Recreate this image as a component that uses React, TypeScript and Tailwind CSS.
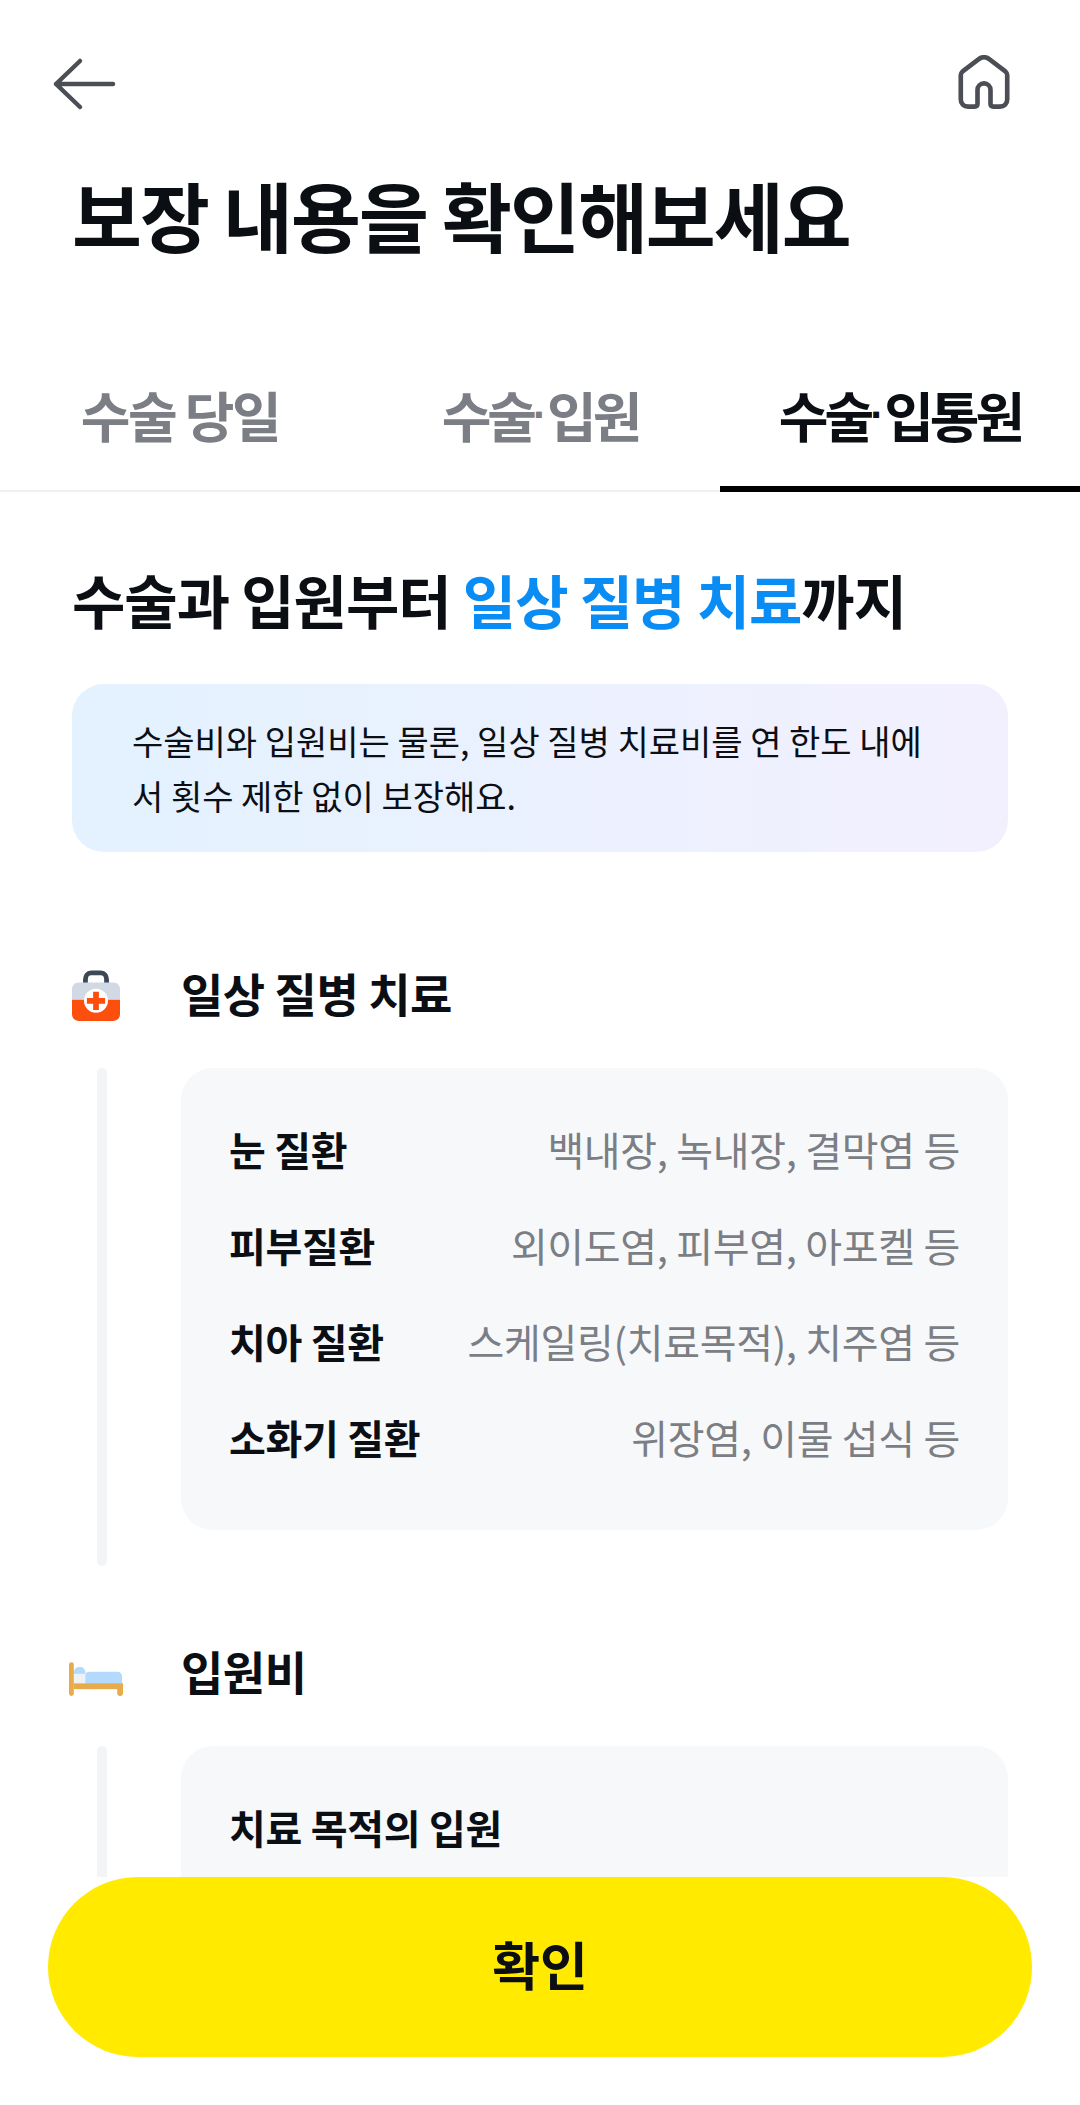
import React from "react";

const diseases = [
  { name: "눈 질환", detail: "백내장, 녹내장, 결막염 등" },
  { name: "피부질환", detail: "외이도염, 피부염, 아포켈 등" },
  { name: "치아 질환", detail: "스케일링(치료목적), 치주염 등" },
  { name: "소화기 질환", detail: "위장염, 이물 섭식 등" },
];

const font = { fontFamily: '"Noto Sans CJK KR", "Noto Sans", sans-serif' };

const FirstAidIcon = () => (
  <svg width="48" height="52" viewBox="0 0 50 54" fill="none">
    <path d="M14 14V10C14 6 16 3 20 3H30C34 3 36 6 36 10V14" stroke="#3c4856" strokeWidth="5" />
    <path d="M0 20C0 16 3 13 7 13H43C47 13 50 16 50 20V31H0V20Z" fill="#d0d9e4" />
    <path d="M0 31H50V46C50 50 47 53 43 53H7C3 53 0 50 0 46V31Z" fill="#fc4f0e" />
    <circle cx="25" cy="32" r="12.5" fill="#fff" />
    <path d="M22 22.5H28V29H34.5V35H28V41.5H22V35H15.5V29H22V22.5Z" fill="#fc4f0e" />
  </svg>
);

const BedIcon = () => (
  <svg width="54" height="35" viewBox="0 0 56 36" fill="none">
    <rect x="5" y="10" width="13" height="16" fill="#eef2f7" />
    <path d="M5 12C5 6 8 5 11 5C14 5 17 6 17 12H5Z" fill="#b3dafc" />
    <path d="M17 14C17 11 19 10 21 10H50C53 10 55 12 55 15V24H17V14Z" fill="#b3dafc" />
    <rect x="0" y="0" width="5" height="35" rx="2.5" fill="#e8ab4c" />
    <rect x="5" y="22" width="51" height="6" fill="#e8ab4c" />
    <rect x="50" y="24" width="6" height="11" rx="2.5" fill="#e8ab4c" />
  </svg>
);

const Dot = () => <span className="font-['Liberation_Sans'] text-[42px] tracking-[0px]">·</span>;

export default function App() {
  return (
    <div className="flex h-[2105px] w-[1080px] flex-col overflow-hidden bg-white text-[#0b0f14]" style={font}>
      <div className="min-h-0 flex-1 overflow-hidden">
        <div className="flex items-center justify-between pl-[52px] pr-[70px] pt-[54px]">
          <svg width="64" height="60" viewBox="0 0 64 60" fill="none" stroke="#4b4f55" strokeWidth="4.5" strokeLinecap="round" strokeLinejoin="round">
            <path d="M61 30H4M28 7L4 30L28 53" />
          </svg>
          <svg className="mb-[3px]" width="52" height="55" viewBox="0 0 56 58" fill="none" stroke="#4b4f55" strokeWidth="5" strokeLinejoin="round">
            <path d="M3 21C3 19 4 18 5 17L22 4C26 1 30 1 34 4L51 17C52 18 53 19 53 21V47C53 52 50 55 45 55H38C36 55 35 54 35 52V37C35 33 32 30 28 30C24 30 21 33 21 37V52C21 54 20 55 18 55H11C6 55 3 52 3 47V21Z" />
          </svg>
        </div>

        <h1 className="mt-[52px] pl-[72px] text-[76px] font-bold leading-[96px] tracking-[-2px]">보장 내용을 확인해보세요</h1>

        <div className="mt-[90px] grid h-[140px] grid-cols-3 border-b-2 border-[#eef0f2] text-[54px] font-bold tracking-[-2.5px] text-[#7b7e84]">
          <div className="flex items-center justify-center pb-[14px]">수술 당일</div>
          <div className="flex items-center justify-center pb-[14px] tracking-[-4px]">수술<Dot />입원</div>
          <div className="-mb-[2px] flex items-center justify-center border-b-[6px] border-black pb-[10px] tracking-[-4px] text-[#0b0f14]">수술<Dot />입통원</div>
        </div>

        <div className="px-[72px]">
          <h2 className="mt-[71px] text-[58px] font-bold leading-[72px] tracking-[-1px]">
            수술과 입원부터 <span className="text-[#0a8cf5]">일상 질병 치료</span>까지
          </h2>
          <div className="mt-[49px] rounded-[32px] bg-gradient-to-r from-[#e3f2fe] to-[#f3f0fe] py-[29px] pl-[60px] pr-[72px] text-[34px] leading-[55px]">
            수술비와 입원비는 물론, 일상 질병 치료비를 연 한도 내에서 횟수 제한 없이 보장해요.
          </div>

          <div className="mt-[108px] flex items-start">
            <div className="w-[109px] pt-[10px]"><FirstAidIcon /></div>
            <h3 className="mt-[2px] text-[46px] font-bold leading-[60px] tracking-[-0.5px]">일상 질병 치료</h3>
          </div>
          <div className="mt-[46px] flex">
            <div className="ml-[25px] h-[498px] w-[10px] rounded-full bg-[#f3f4f6]" />
            <div className="ml-[74px] h-[462px] flex-1 rounded-[32px] bg-[#f7f8fa] px-[48px] pt-[33px]">
              {diseases.map((d) => (
                <div key={d.name} className="flex h-[96px] items-center justify-between text-[40px] tracking-[-0.3px]">
                  <span className="font-bold">{d.name}</span>
                  <span className="text-[#7b7e84]">{d.detail}</span>
                </div>
              ))}
            </div>
          </div>

          <div className="mt-[71px] flex items-start">
            <div className="-ml-[3px] w-[112px] pt-[25px]"><BedIcon /></div>
            <h3 className="mt-[3px] text-[46px] font-bold leading-[60px] tracking-[-0.5px]">입원비</h3>
          </div>
          <div className="mt-[46px] flex">
            <div className="ml-[25px] h-[498px] w-[10px] rounded-full bg-[#f3f4f6]" />
            <div className="ml-[74px] h-[462px] flex-1 rounded-[32px] bg-[#f7f8fa] px-[48px] pt-[33px]">
              <div className="flex h-[96px] items-center text-[40px] font-bold tracking-[-0.3px]">치료 목적의 입원</div>
            </div>
          </div>
        </div>
      </div>

      <div className="bg-white px-[48px] pb-[48px]">
        <button className="flex h-[180px] w-full items-center justify-center rounded-full bg-[#ffea00] pb-[6px] text-[52px] font-bold">확인</button>
      </div>
    </div>
  );
}
